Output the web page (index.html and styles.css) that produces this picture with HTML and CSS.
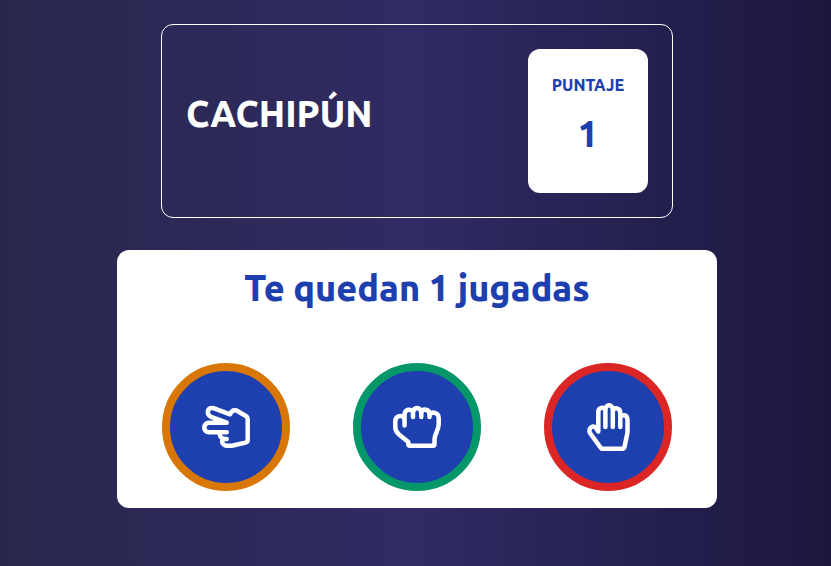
FILE: index.html
```html
<!DOCTYPE html>
<html lang="es">
<head>
<meta charset="utf-8">
<meta name="viewport" content="width=device-width, initial-scale=1">
<title>Cachipún</title>
<link rel="stylesheet" href="styles.css">
</head>
<body>
<main class="game">
  <header class="banner">
    <h1 class="heading">CACHIPÚN</h1>
    <section class="score">
      <h2 class="score-label">PUNTAJE</h2>
      <p class="score-value">1</p>
    </section>
  </header>
  <section class="board">
    <h2 class="heading">Te quedan 1 jugadas</h2>
    <div class="moves">
      <button class="move scissors" type="button" aria-label="Tijera">
        <svg class="icon" viewBox="0 0 48 48" aria-hidden="true"><path d="M24.700 19.700L9 13.800C3.500 11.500 5.500 3.600 11.500 5.100L28 11.300C29.500 7.500 31.500 6.500 34.500 7.500L43.500 12.700Q45.700 14 45.700 16.500V37Q45.700 39 43.500 39.600L31 42.500Q29 42.800 25 42.700C21 42.700 19.300 39.500 20.500 36H24.700H22.500C18.500 35.500 17 32.500 18.300 29.200H24.700H7C.7 29.200.7 19.700 7 19.700Z"/></svg>
      </button>
      <button class="move rock" type="button" aria-label="Piedra">
        <svg class="icon" viewBox="0 0 48 48" aria-hidden="true"><path d="M11.500 22.500V12C11.500 6 18.500 5 20 9.500V14V9.500C21 3.500 27 3.500 28.300 9.500V14V9.500C30 5 36.500 6 36.500 11.500V14V11.500C38.500 8.500 45.700 9 45.700 15V21C45.700 28 41.500 30 41.500 37V41Q41.500 42.700 40 42.700H17Q15.300 42.700 15.300 41V39L6 31.500Q2.300 28.500 2.300 24V18.500C2.300 12 10 11.500 11.500 16"/></svg>
      </button>
      <button class="move paper" type="button" aria-label="Papel">
        <svg class="icon" viewBox="0 0 42 48" aria-hidden="true"><path d="M11.300 28.500V9C11.300 4 17 3.500 18.400 7.500V24V7C18.400.8 25.800.8 25.800 7V24V8C27.500 3.500 33.300 5 33.300 10V24V15C34.500 10.500 40.500 11.500 40.500 17V28Q40.500 30 40 32L37.500 44Q37 45.800 35.500 45.800H15.500Q14.500 45.800 13.700 44.800L3 30C.5 26 6 20.500 9.200 25.200Z"/></svg>
      </button>
    </div>
  </section>
</main>
</body>
</html>
```
FILE: styles.css
```css
* {
  box-sizing: border-box;
  margin: 0;
}

body {
  min-height: 100vh;
  font-family: Ubuntu, "Noto Sans", sans-serif;
  font-weight: 800;
  color: #fff;
  background: linear-gradient(to right, #29274d, #302b63 50%, #231f4d 80%, #1d173f);
}

.game {
  display: flex;
  flex-direction: column;
  align-items: center;
  gap: 32px;
  padding: 24px 0 24px 3px;
}

.banner {
  display: flex;
  justify-content: space-between;
  width: 100%;
  max-width: 512px;
  padding: 24px;
  border: 1px solid #fff;
  border-radius: 12px;
}

.heading {
  font-size: 36px;
  font-weight: 800;
  line-height: 40px;
}

.banner .heading {
  padding-top: 45px;
}

.score {
  width: 120px;
  height: 144px;
  padding: 24px 0;
  border-radius: 12px;
  background: #fff;
  color: #1e40af;
  text-align: center;
}

.score-label {
  font-size: 16px;
  font-weight: 800;
  line-height: 24px;
}

.score-value {
  margin-top: 17px;
  font-size: 36px;
  line-height: 40px;
}

.board {
  width: 100%;
  max-width: 600px;
  padding: 18px 45px 17px;
  border-radius: 12px;
  background: #fff;
  color: #1e40af;
  text-align: center;
}

.moves {
  display: flex;
  justify-content: space-between;
  margin-top: 55px;
}

.move {
  display: grid;
  place-items: center;
  width: 128px;
  height: 128px;
  padding: 0;
  border: 8px solid;
  border-radius: 50%;
  background: #1e40af;
  cursor: pointer;
}

.scissors {
  border-color: #d97706;
}

.rock {
  border-color: #059669;
}

.paper {
  border-color: #dc2626;
}

.icon {
  height: 48px;
  overflow: visible;
  fill: none;
  stroke: #fff;
  stroke-width: 4.5;
  stroke-linecap: round;
  stroke-linejoin: round;
}
```
